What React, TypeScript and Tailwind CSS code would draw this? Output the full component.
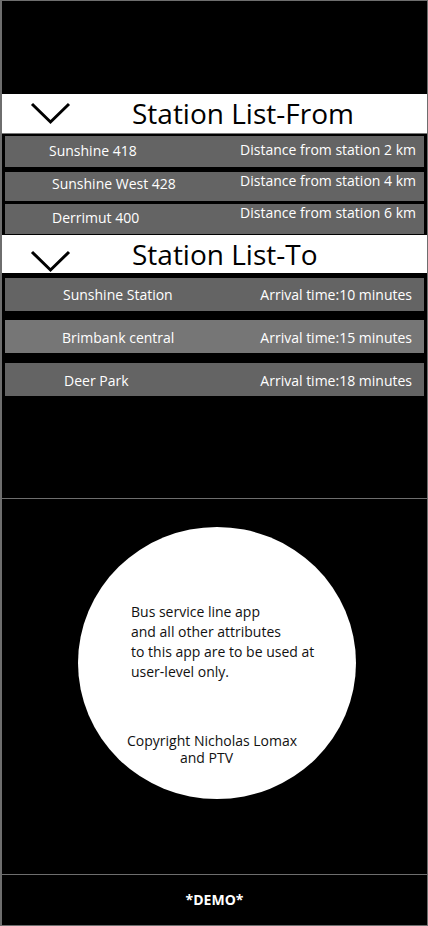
import React from "react";

const font = { fontFamily: '"Open Sans", "Noto Sans", sans-serif' };

function Chevron() {
  return (
    <svg width="41" height="23" viewBox="0 0 41 23" className="block">
      <polyline points="2,2 20.5,20 39,2" fill="none" stroke="#000" strokeWidth="3" />
    </svg>
  );
}

type FromRow = { name: string; dist: string; h: string; lm: string; rm: string; pl: string };

const fromRows: FromRow[] = [
  { name: "Sunshine 418", dist: "Distance from station 2 km", h: "h-[31px]", lm: "mt-[5px]", rm: "mt-[4px]", pl: "pl-[44px]" },
  { name: "Sunshine West 428", dist: "Distance from station 4 km", h: "h-[29px]", lm: "mt-[2px]", rm: "-mt-[1px]", pl: "pl-[47px]" },
  { name: "Derrimut 400", dist: "Distance from station 6 km", h: "h-[30px]", lm: "mt-[4px]", rm: "-mt-[1px]", pl: "pl-[47px]" },
];

type ToRow = { name: string; time: string; bg: string; pl: string; pt: string };

const toRows: ToRow[] = [
  { name: "Sunshine Station", time: "Arrival time:10 minutes", bg: "bg-[#646464]", pl: "pl-[58px]", pt: "pt-[0px]" },
  { name: "Brimbank central", time: "Arrival time:15 minutes", bg: "bg-[#767676]", pl: "pl-[57px]", pt: "pt-[3px]" },
  { name: "Deer Park", time: "Arrival time:18 minutes", bg: "bg-[#646464]", pl: "pl-[59px]", pt: "pt-[3px]" },
];

export default function App() {
  return (
    <div
      style={font}
      className="w-[428px] h-[926px] bg-black border-l-2 border-t border-r border-b border-[#6e6e6e] flex flex-col overflow-hidden"
    >
      <div className="h-[93px] shrink-0" />

      {/* Header From */}
      <div className="h-[40px] shrink-0 bg-white border-b border-[#777] flex items-start">
        <div className="ml-[28px] mt-[8px]">
          <Chevron />
        </div>
        <div className="ml-[61px] text-[28px] leading-[38px] text-black">
          Station List-From
        </div>
      </div>

      {/* From list */}
      <div className="shrink-0 px-[3px] pt-[2px] pb-[1px] flex flex-col">
        {fromRows.map((r, i) => (
          <div
            key={r.name}
            className={`${r.h} ${i === 1 ? "mt-[5px]" : i === 2 ? "mt-[3px]" : ""} bg-[#646464] flex items-start justify-between ${r.pl} pr-[8px] text-white text-[14px] leading-[20px]`}
          >
            <span className={r.lm}>{r.name}</span>
            <span className={r.rm}>{r.dist}</span>
          </div>
        ))}
      </div>

      {/* Header To */}
      <div className="h-[38px] shrink-0 bg-white flex items-start">
        <div className="ml-[28px] mt-[15px]">
          <Chevron />
        </div>
        <div className="ml-[61px] text-[28px] leading-[38px] text-black">
          Station List-To
        </div>
      </div>

      {/* To list */}
      <div className="shrink-0 px-[3px] pt-[5px] flex flex-col gap-[9px]">
        {toRows.map((r, i) => (
          <div
            key={r.name}
            className={`h-[33px] ${i === 2 ? "mt-[1px]" : ""} ${r.bg} flex items-center justify-between ${r.pl} ${r.pt} pr-[12px] text-white text-[14px] leading-[20px]`}
          >
            <span>{r.name}</span>
            <span>{r.time}</span>
          </div>
        ))}
      </div>

      <div className="h-[102px] shrink-0" />

      {/* About section */}
      <div className="h-[376px] shrink-0 border-t border-[#6e6e6e] flex flex-col">
        <div className="ml-[76px] mt-[28px] w-[278px] h-[272px] rounded-[50%] bg-white flex flex-col text-[#111] text-[14px]">
          <div className="pl-[53px] pt-[75px] leading-[20px]">
            <div>Bus service line app</div>
            <div>and all other attributes</div>
            <div>to this app are to be used at</div>
            <div>user-level only.</div>
          </div>
          <div className="mt-[50px] leading-[17px]">
            <div className="pl-[49px]">Copyright Nicholas Lomax</div>
            <div className="pl-[102px]">and PTV</div>
          </div>
        </div>
      </div>

      {/* Footer */}
      <div className="flex-1 border-t border-[#6e6e6e] flex items-center justify-center">
        <span className="text-white font-bold text-[14px] pb-[1px]">*DEMO*</span>
      </div>
    </div>
  );
}
